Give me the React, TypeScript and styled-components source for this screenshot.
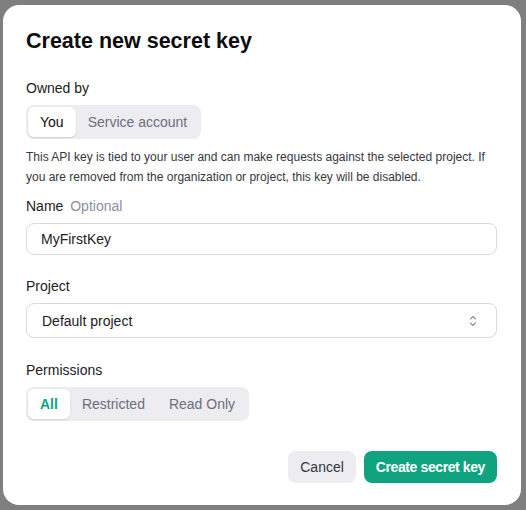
import { useState } from "react";
import styled, { createGlobalStyle } from "styled-components";

const GlobalStyle = createGlobalStyle`
  html, body {
    margin: 0;
    padding: 0;
    background: #7f7f7f;
  }
  body {
    font-family: "Liberation Sans", Arial, sans-serif;
    color: #0d0d0d;
  }
`;

export default function App() {
  const [owner, setOwner] = useState("You");
  const [permission, setPermission] = useState("All");
  const [name, setName] = useState("MyFirstKey");

  return (
    <>
      <GlobalStyle />
      <Page>
        <Modal>
          <Title>Create new secret key</Title>

          <Label $gap={23}>Owned by</Label>
          <Segmented>
            {["You", "Service account"].map((opt) => (
              <Segment key={opt} $active={owner === opt} onClick={() => setOwner(opt)}>
                {opt}
              </Segment>
            ))}
          </Segmented>
          <Description>
            This API key is tied to your user and can make requests against the selected project. If
            you are removed from the organization or project, this key will be disabled.
          </Description>

          <Label $gap={9}>
            Name <Optional>Optional</Optional>
          </Label>
          <TextInput value={name} onChange={(e) => setName(e.target.value)} />

          <Label $gap={21}>Project</Label>
          <Select>
            <span>Default project</span>
            <ChevronUpDown />
          </Select>

          <Label $gap={22}>Permissions</Label>
          <Segmented>
            {["All", "Restricted", "Read Only"].map((opt) => (
              <Segment
                key={opt}
                $active={permission === opt}
                $accent
                onClick={() => setPermission(opt)}
              >
                {opt}
              </Segment>
            ))}
          </Segmented>

          <Footer>
            <Button>Cancel</Button>
            <Button $primary>Create secret key</Button>
          </Footer>
        </Modal>
      </Page>
    </>
  );
}

function ChevronUpDown() {
  return (
    <svg width="10" height="14" viewBox="0 0 10 14" fill="none">
      <path d="M2.5 5 L5 2.5 L7.5 5" stroke="#8e8ea0" strokeWidth="1.1" strokeLinecap="round" strokeLinejoin="round" />
      <path d="M2.5 9 L5 11.5 L7.5 9" stroke="#8e8ea0" strokeWidth="1.1" strokeLinecap="round" strokeLinejoin="round" />
    </svg>
  );
}

const Page = styled.div`
  width: 526px;
  height: 510px;
  padding: 5px 5px 5px 3px;
  box-sizing: border-box;
`;

const Modal = styled.div`
  width: 518px;
  height: 500px;
  box-sizing: border-box;
  background: #ffffff;
  border-radius: 16px;
  padding: 22px 24px 22px 23px;
  display: flex;
  flex-direction: column;
  align-items: flex-start;
`;

const Title = styled.h2`
  margin: 0;
  font-size: 21.5px;
  line-height: 28px;
  font-weight: 700;
  color: #0d0d0d;
`;

const Label = styled.div<{ $gap: number }>`
  margin-top: ${(p) => p.$gap}px;
  font-size: 14px;
  line-height: 20px;
  font-weight: 400;
  color: #202123;
`;

const Optional = styled.span`
  margin-left: 3px;
  color: #8e8ea0;
`;

const Segmented = styled.div`
  margin-top: 7px;
  display: flex;
  padding: 2px;
  background: #ececf1;
  border-radius: 8px;
`;

const Segment = styled.button<{ $active?: boolean; $accent?: boolean }>`
  border: none;
  font-family: inherit;
  font-size: 14px;
  line-height: 20px;
  font-weight: ${(p) => (p.$active && p.$accent ? 700 : 400)};
  padding: 5px 12px;
  border-radius: 6px;
  cursor: pointer;
  background: ${(p) => (p.$active ? "#ffffff" : "transparent")};
  box-shadow: ${(p) => (p.$active ? "0 1px 2px rgba(0,0,0,0.12)" : "none")};
  color: ${(p) => (p.$active ? (p.$accent ? "#10a37f" : "#0d0d0d") : "#6e6e80")};
`;

const Description = styled.p`
  margin: 8px 0 0;
  font-size: 12px;
  line-height: 20px;
  color: #353740;
`;

const TextInput = styled.input`
  margin-top: 7px;
  width: 100%;
  box-sizing: border-box;
  height: 32px;
  border: 1px solid #d9d9e3;
  border-radius: 8px;
  padding: 0 14px;
  font-family: inherit;
  font-size: 14px;
  color: #202123;
  outline: none;
`;

const Select = styled.div`
  margin-top: 7px;
  width: 100%;
  box-sizing: border-box;
  height: 35px;
  border: 1px solid #d9d9e3;
  border-radius: 8px;
  padding: 0 18px 0 15px;
  display: flex;
  align-items: center;
  justify-content: space-between;
  font-size: 14px;
  color: #202123;
`;

const Footer = styled.div`
  margin-top: auto;
  align-self: stretch;
  display: flex;
  justify-content: flex-end;
  gap: 8px;
`;

const Button = styled.button<{ $primary?: boolean }>`
  height: 32px;
  padding: 0 12px;
  border: none;
  border-radius: 8px;
  font-family: inherit;
  font-size: 14px;
  font-weight: ${(p) => (p.$primary ? 700 : 400)};
  letter-spacing: ${(p) => (p.$primary ? "-0.4px" : "0")};
  cursor: pointer;
  background: ${(p) => (p.$primary ? "#10a37f" : "#ececf1")};
  color: ${(p) => (p.$primary ? "#ffffff" : "#353740")};
`;
